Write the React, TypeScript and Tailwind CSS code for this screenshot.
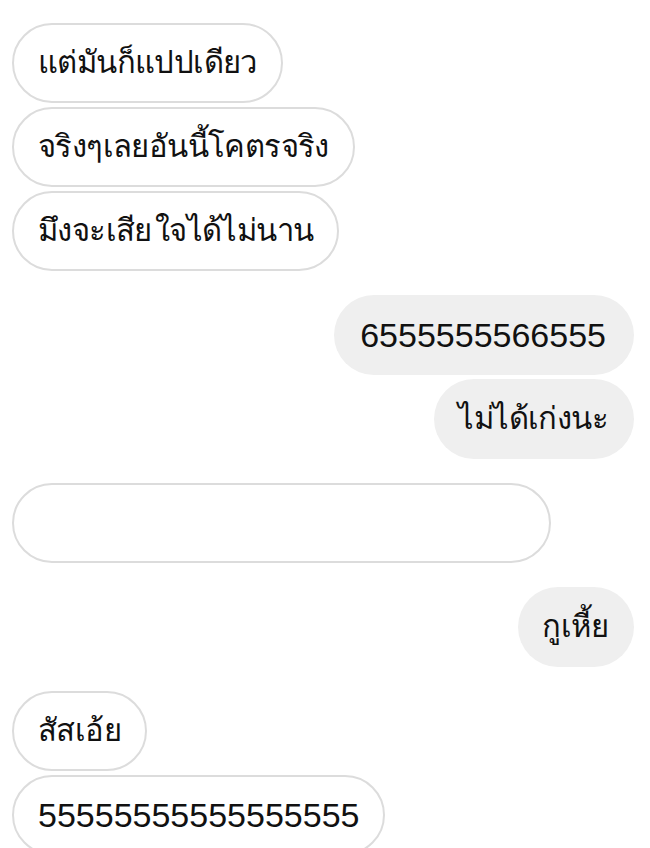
const font = { fontFamily: '"Liberation Sans", "Noto Sans", sans-serif' };

type Msg = { text: string; mine?: boolean; gap?: boolean; blank?: boolean; num?: boolean };

const messages: Msg[] = [
  { text: "แต่มันก็แปปเดียว" },
  { text: "จริงๆเลยอันนี้โคตรจริง" },
  { text: "มึงจะเสีย ใจได้ไม่นาน" },
  { text: "6555555566555", mine: true, gap: true, num: true },
  { text: "ไม่ได้เก่งนะ", mine: true },
  { text: "", blank: true, gap: true },
  { text: "กูเหี้ย", mine: true, gap: true },
  { text: "สัสเอ้ย", gap: true },
  { text: "55555555555555555", num: true },
];

function Bubble({ m }: { m: Msg }) {
  const size = m.num
    ? "text-[34px] "
    : "text-[31px] tracking-[-0.6px] [word-spacing:-5px] ";
  if (m.mine) {
    return (
      <div className={"flex justify-end " + (m.gap ? "mt-5" : "")}>
        <div
          className={
            "h-[80px] flex items-center rounded-full bg-[#efefef] text-[#111] whitespace-nowrap " +
            (m.num ? "pl-[26px] pr-[28px] " : "pl-6 pr-[26px] ") +
            size
          }
        >
          {m.text}
        </div>
      </div>
    );
  }
  return (
    <div className={"flex justify-start " + (m.gap ? "mt-5" : "")}>
      <div
        className={
          "h-[80px] flex items-center px-6 rounded-full bg-white border-2 border-[#dcdcdc] text-[#111] whitespace-nowrap " +
          size +
          (m.blank ? "w-[539px]" : "")
        }
      >
        {m.text}
      </div>
    </div>
  );
}

export default function App() {
  return (
    <div className="w-[650px] h-[848px] overflow-hidden bg-white pl-3 pr-4 pt-[23px]" style={font}>
      <div className="flex flex-col gap-1">
        {messages.map((m, i) => (
          <Bubble key={i} m={m} />
        ))}
      </div>
    </div>
  );
}
